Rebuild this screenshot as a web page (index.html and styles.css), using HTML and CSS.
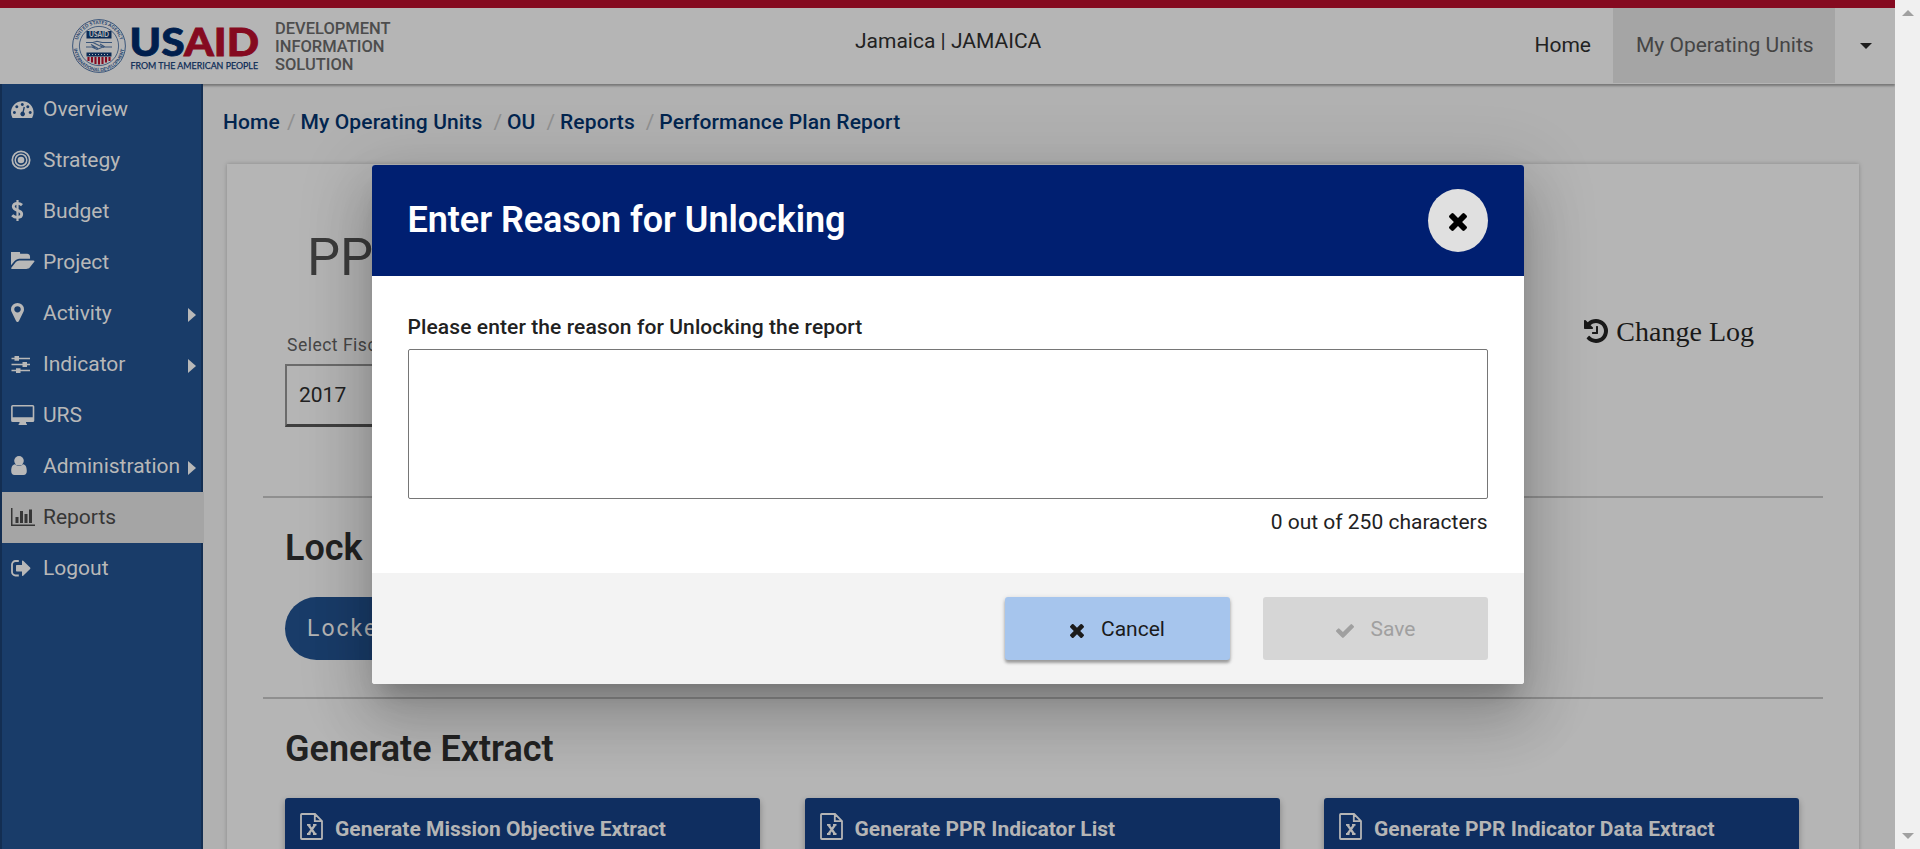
FILE: index.html
```html
<!DOCTYPE html>
<html lang="en">
<head>
<meta charset="utf-8">
<title>Performance Plan Report</title>
<link rel="stylesheet" href="styles.css">
</head>
<body>
<div class="app">
  <div class="page">
    <header class="topbar">
      <div class="brand">
        <svg class="logo" width="192" height="58" viewBox="0 0 192 58">
          <defs>
            <path id="arcTop" d="M6 29a22 22 0 0 1 44 0"/>
            <path id="arcBottom" d="M2.600 29a25.400 25.400 0 0 0 50.800 0"/>
          </defs>
          <circle cx="28" cy="29" r="26.400" fill="none" stroke="#3a5579" stroke-width="1"/>
          <circle cx="28" cy="29" r="19.600" fill="none" stroke="#3a5579" stroke-width=".9"/>
          <text class="seal"><textPath href="#arcTop" startOffset="6" textLength="57">UNITED STATES AGENCY</textPath></text>
          <text class="seal"><textPath href="#arcBottom" startOffset="3" textLength="73">INTERNATIONAL DEVELOPMENT</textPath></text>
          <rect x="15.500" y="14" width="25" height="7.500" fill="#0a2a55"/>
          <text class="seal-name" x="18" y="20" textLength="20">USAID</text>
          <path d="M15 25.500h7l4-1.300 5 1.300h10M15 30h6l5 2.500 6-2.500h9M22 25.500l6 3 5 2M24 31l-3-3M29 27l5 3M20 27.500l7 4" fill="none" stroke="#3a5579" stroke-width="1.100"/>
          <path d="M15.500 35.500h25v4h-25z" fill="#0a2a55"/>
          <path d="M18 37.500h21" stroke="#b5b5b5" stroke-width="1" stroke-dasharray="1 2"/>
          <path d="M17.500 40v4M21 40v5.500M24.500 40v7M28 40v7.500M31.500 40v7M35 40v5.500M38.500 40v4" stroke="#850a20" stroke-width="2.100"/>
          <text class="word" x="58.500" y="38.500" textLength="129.500" lengthAdjust="spacingAndGlyphs"><tspan fill="#001f4e" stroke="#001f4e">US</tspan><tspan fill="#850a20" stroke="#850a20">AID</tspan></text>
          <text class="tagline" x="59.500" y="51.500" textLength="127.500" lengthAdjust="spacingAndGlyphs">FROM THE AMERICAN PEOPLE</text>
        </svg>
        <div class="product">DEVELOPMENT<br>INFORMATION<br>SOLUTION</div>
      </div>
      <div class="unit">Jamaica | JAMAICA</div>
      <nav class="topnav">
        <a class="topnav-item">Home</a>
        <a class="topnav-item is-active">My Operating Units</a>
        <a class="topnav-item topnav-more"><i class="caret"></i></a>
      </nav>
    </header>
    <div class="body">
      <aside class="sidebar">
        <a class="side-item"><span class="ico"><svg width="23" height="17" viewBox="0 0 23 17"><path fill-rule="evenodd" d="M1.500 17Q0 14.500 0 11.500A11.300 11.300 0 0 1 22.600 11.500Q22.600 14.500 21.100 17zM3.400 9.900a1.500 1.500 0 1 0 .01 0zM5.800 4.300a1.500 1.500 0 1 0 .01 0zM11.300 1.900a1.500 1.500 0 1 0 .01 0zM16.800 4.300a1.500 1.500 0 1 0 .01 0zM19.200 9.900a1.500 1.500 0 1 0 .01 0zM12.600 5.800l-1 4.800a2.300 2.300 0 1 0 1.200.3l1.100-4.700z"/></svg></span><span class="side-label">Overview</span></a>
        <a class="side-item"><span class="ico up1"><svg width="20" height="20" viewBox="0 0 20 20"><circle cx="10" cy="10" r="8.700" fill="none" stroke="currentColor" stroke-width="1.700"/><circle cx="10" cy="10" r="5.800" fill="none" stroke="currentColor" stroke-width="1.500"/><circle cx="10" cy="10" r="3.300"/></svg></span><span class="side-label">Strategy</span></a>
        <a class="side-item"><span class="ico up1"><svg width="13" height="21" viewBox="0 0 13 21"><path d="M6.500 0v21" stroke="currentColor" stroke-width="2.200"/><path d="M11 5.200Q9 3.400 6.300 3.400C3.500 3.400 2.300 4.900 2.300 6.600c0 4.700 8.400 2.800 8.400 7.400 0 2-1.700 3.400-4.400 3.400Q3.200 17.400 1.200 15.300" fill="none" stroke="currentColor" stroke-width="2.900"/></svg></span><span class="side-label">Budget</span></a>
        <a class="side-item"><span class="ico up2"><svg width="24" height="17" viewBox="0 256 1856 1280" preserveAspectRatio="none"><path d="M1815 952q0 31-31 66l-336 396q-43 51-120.500 86.500t-143.500 35.500h-1088q-34 0-60.500-13t-26.500-43q0-31 31-66l336-396q43-51 120.500-86.500t143.500-35.500h1088q34 0 60.500 13t26.500 43zm-343-344v160h-832q-94 0-197 47.500t-164 119.500l-337 396-5 6q0-4-.5-12.500t-.5-12.500v-960q0-92 66-158t158-66h320q92 0 158 66t66 158v32h544q92 0 158 66t66 158z"/></svg></span><span class="side-label">Project</span></a>
        <a class="side-item"><span class="ico up1"><svg width="13" height="19" viewBox="384 128 1024 1536" preserveAspectRatio="none"><path d="M1152 640q0-106-75-181t-181-75-181 75-75 181 75 181 181 75 181-75 75-181zm256 0q0 109-33 179l-364 774q-16 33-47.500 52t-67.500 19-67.500-19-46.500-52l-365-774q-33-70-33-179 0-212 150-362t362-150 362 150 150 362z"/></svg></span><span class="side-label">Activity</span><i class="more"></i></a>
        <a class="side-item"><span class="ico"><svg width="20" height="17" viewBox="0 0 20 17"><path d="M.5 2.500h18.500M.5 8.500h18.500M.5 14.500h18.500" stroke="currentColor" stroke-width="1.700"/><path d="M3.500 0h4.500v4.800H3.500zM11.500 6.100H16v4.800h-4.500zM5 12.200h4.500V17H5z"/></svg></span><span class="side-label">Indicator</span><i class="more"></i></a>
        <a class="side-item"><span class="ico up1"><svg width="24" height="20" viewBox="0 0 24 20"><path fill-rule="evenodd" d="M1.700 0h20A1.600 1.600 0 0 1 23.300 1.600v13.900a1.600 1.600 0 0 1-1.600 1.600H15v1.200q.9.300.9.900v.8H7.600v-.8q0-.6.900-.9v-1.200H1.700A1.600 1.600 0 0 1 .1 15.500V1.600A1.600 1.600 0 0 1 1.700 0zm0 1.500v10.800h20V1.500z"/></svg></span><span class="side-label">URS</span></a>
        <a class="side-item"><span class="ico up1"><svg width="16" height="19" viewBox="0 0 16 19"><circle cx="8" cy="4.800" r="4.800"/><path d="M4 8.300a5.700 5.700 0 0 0 8 0c2.700.2 3.800 3.200 3.800 6.700 0 2.400-1.300 4-3.200 4H3.400C1.500 19 .2 17.400.2 15c0-3.500 1.100-6.500 3.800-6.700z"/></svg></span><span class="side-label">Administration</span><i class="more"></i></a>
        <a class="side-item is-active"><span class="ico up1"><svg width="24" height="18" viewBox="0 128 2048 1536"><path d="M640 896v512h-256v-512h256zm384-512v1024h-256v-1024h256zm1024 1152v128h-2048v-1536h128v1408h1920zm-640-896v768h-256v-768h256zm384-384v1152h-256v-1152h256z"/></svg></span><span class="side-label">Reports</span></a>
        <a class="side-item"><span class="ico"><svg width="20" height="17" viewBox="0 0 20 17"><path d="M7.800 1H4.500A3.500 3.500 0 0 0 1 4.500v7.500a3.500 3.500 0 0 0 3.500 3.500h3.300" fill="none" stroke="currentColor" stroke-width="1.800"/><path d="M5 5.700Q5 5 5.700 5H11V1.300Q11 0 12.200.8l6.900 6.800q.7.700 0 1.400l-6.900 6.700q-1.200.8-1.200-.5v-3.700H5.700Q5 11.500 5 10.800z"/></svg></span><span class="side-label">Logout</span></a>
      </aside>
      <main class="main">
        <nav class="crumbs"><a>Home</a><i class="first">/</i><a>My Operating Units</a><i>/</i><a>OU</a><i>/</i><a>Reports</a><i>/</i><a>Performance Plan Report</a></nav>
        <section class="sheet">
          <div class="sheet-head">
            <div class="filters">
              <h1 class="sheet-title">PPR</h1>
              <div class="field-label">Select Fiscal Year</div>
              <div class="select">2017</div>
            </div>
            <a class="changelog"><svg width="24" height="24" viewBox="128 128 1536 1536"><path d="M1664 896q0 156-61 298t-164 245-245 164-298 61q-172 0-327-72.500t-264-204.500q-7-10-6.500-22.500t8.500-20.500l137-138q10-9 25-9 16 2 23 12 73 95 179 147t225 52q104 0 198.500-40.500t163.500-109.500 109.500-163.500 40.500-198.500-40.500-198.500-109.500-163.500-163.500-109.500-198.500-40.500q-98 0-188 35.500t-160 101.500l137 138q31 30 14 69-17 40-59 40h-448q-26 0-45-19t-19-45v-448q0-42 40-59 39-17 69 14l130 129q107-101 244.500-156.500t284.500-55.500q156 0 298 61t245 164 164 245 61 298zm-640-288v448q0 14-9 23t-23 9h-320q-14 0-23-9t-9-23v-64q0-14 9-23t23-9h224v-352q0-14 9-23t23-9h64q14 0 23 9t9 23z"/></svg><span>Change Log</span></a>
          </div>
          <div class="block lock">
            <h2 class="block-title">Lock</h2>
            <span class="pill">Locked</span>
          </div>
          <div class="block">
            <h2 class="block-title">Generate Extract</h2>
            <div class="extracts">
              <a class="extract"><svg width="23" height="27" viewBox="0 0 23 27"><path d="M1 1.800Q1 1 1.800 1H15l7 7v17.200q0 .8-.8.8H1.800Q1 26 1 25.200zM14.800 1v7.200H22M7 11.800h3.500M13 11.800h3.500M7 21h3.500M13 21h3.500" fill="none" stroke="currentColor" stroke-width="1.800"/><path d="M8.500 12l6.500 9M15 12l-6.500 9" stroke="currentColor" stroke-width="2.200"/></svg><span>Generate Mission Objective Extract</span></a>
              <a class="extract"><svg width="23" height="27" viewBox="0 0 23 27"><path d="M1 1.800Q1 1 1.800 1H15l7 7v17.200q0 .8-.8.8H1.800Q1 26 1 25.200zM14.800 1v7.200H22M7 11.800h3.500M13 11.800h3.500M7 21h3.500M13 21h3.500" fill="none" stroke="currentColor" stroke-width="1.800"/><path d="M8.500 12l6.500 9M15 12l-6.500 9" stroke="currentColor" stroke-width="2.200"/></svg><span>Generate PPR Indicator List</span></a>
              <a class="extract"><svg width="23" height="27" viewBox="0 0 23 27"><path d="M1 1.800Q1 1 1.800 1H15l7 7v17.200q0 .8-.8.8H1.800Q1 26 1 25.200zM14.800 1v7.200H22M7 11.800h3.500M13 11.800h3.500M7 21h3.500M13 21h3.500" fill="none" stroke="currentColor" stroke-width="1.800"/><path d="M8.500 12l6.500 9M15 12l-6.500 9" stroke="currentColor" stroke-width="2.200"/></svg><span>Generate PPR Indicator Data Extract</span></a>
            </div>
          </div>
        </section>
      </main>
    </div>
    <div class="overlay">
      <div class="modal">
        <div class="modal-head">
          <h2 class="modal-title">Enter Reason for Unlocking</h2>
          <button class="close"><svg width="18" height="18" viewBox="302 302 1188 1188"><path d="M1490 1322q0 40-28 68l-136 136q-28 28-68 28t-68-28l-294-294-294 294q-28 28-68 28t-68-28l-136-136q-28-28-28-68t28-68l294-294-294-294q-28-28-28-68t28-68l136-136q28-28 68-28t68 28l294 294 294-294q28-28 68-28t68 28l136 136q28 28 28 68t-28 68l-294 294 294 294q28 28 28 68z" transform="translate(0 -64)"/></svg></button>
        </div>
        <div class="modal-body">
          <label class="prompt">Please enter the reason for Unlocking the report</label>
          <div class="textarea"></div>
          <div class="counter">0 out of 250 characters</div>
        </div>
        <div class="modal-foot">
          <button class="btn btn-cancel"><svg width="14" height="14" viewBox="302 302 1188 1188"><path d="M1490 1322q0 40-28 68l-136 136q-28 28-68 28t-68-28l-294-294-294 294q-28 28-68 28t-68-28l-136-136q-28-28-28-68t28-68l294-294-294-294q-28-28-28-68t28-68l136-136q28-28 68-28t68 28l294 294 294-294q28-28 68-28t68 28l136 136q28 28 28 68t-28 68l-294 294 294 294q28 28 28 68z" transform="translate(0 -64)"/></svg><span>Cancel</span></button>
          <button class="btn btn-save"><svg width="18" height="14" viewBox="121 334 1550 1188"><path d="M1671 566q0 40-28 68l-724 724-136 136q-28 28-68 28t-68-28l-136-136-362-362q-28-28-28-68t28-68l136-136q28-28 68-28t68 28l294 295 656-657q28-28 68-28t68 28l136 136q28 28 28 68z"/></svg><span>Save</span></button>
        </div>
      </div>
    </div>
  </div>
  <div class="scrollbar"><i class="sb-up"></i><i class="sb-down"></i></div>
</div>
</body>
</html>
```

FILE: styles.css
```css
* { box-sizing: border-box; }
body { margin: 0; background: #b1b1b1; font-family: Roboto, "Liberation Sans", sans-serif; font-size: 21px; color: #222; }
h1, h2 { margin: 0; }
svg { display: block; fill: currentColor; flex: none; }

.app { display: flex; width: 1920px; height: 849px; overflow: hidden; }
.page { position: relative; width: 1895px; height: 849px; overflow: hidden; display: flex; flex-direction: column; }

.topbar { display: flex; flex: none; height: 84px; background: #b5b5b5; border-top: 8px solid #850a20; box-shadow: 0 2px 2px #777; position: relative; }
.brand { display: flex; width: 855px; padding: 9px 0 0 71px; }
.logo { flex: none; overflow: visible; }
.seal { font-family: Lato, sans-serif; font-weight: 900; font-size: 4.700px; fill: #2d4a73; }
.seal-name { font-family: Lato, sans-serif; font-weight: 900; font-size: 6.500px; fill: #b5b5b5; }
.word { font-family: Lato, sans-serif; font-weight: 900; font-size: 37.500px; stroke-width: .8px; }
.tagline { font-family: Lato, sans-serif; font-weight: 400; font-size: 9.800px; fill: #0a2a55; stroke: #0a2a55; stroke-width: .25px; }
.product { margin: 3px 0 0 12px; font-size: 16.500px; line-height: 18px; font-weight: 500; color: #4d4d4d; }
.unit { flex: 1; padding-top: 21px; line-height: 25px; }
.topnav { display: flex; height: 75px; }
.topnav-item { display: flex; align-items: center; padding: 0 22px 2px; color: #222; white-space: nowrap; }
.topnav-item.is-active { background: #a5a5a5; color: #444; width: 222px; padding-left: 23px; }
.topnav-item.topnav-more { width: 60px; padding: 0 0 0 25px; }
.caret { border: 6px solid transparent; border-top-color: #1c1c1c; border-bottom: 0; }

.body { display: flex; flex: 1; min-height: 0; }
.sidebar { width: 203px; flex: none; background: #193c69; border-left: 2px solid #132e52; border-right: 2px solid #132e52; position: relative; }
.side-item { display: flex; align-items: center; height: 51px; padding-left: 9px; color: #b8b8b8; }
.side-item.is-active { background: #a5a5a5; color: #363636; width: 202px; }
.side-label { padding-bottom: 2px; }
.ico { width: 32px; flex: none; }
.up1 { padding-bottom: 2px; }
.up2 { padding-bottom: 4px; }
.more { margin: 2px 5px 0 auto; border: 7px solid transparent; border-left: 8px solid #b8b8b8; border-right: 0; }

.main { flex: 1; min-width: 0; padding: 0 36px 0 24px; }
.crumbs { display: flex; height: 80px; padding-top: 26px; margin-left: -4px; line-height: 25px; font-weight: 500; letter-spacing: .14px; color: #02254f; }
.crumbs i { font-style: normal; font-weight: 400; color: #8f8f8f; width: 24.500px; padding-left: 11px; }
.crumbs .first { width: 20.500px; padding-left: 7px; }
.sheet { height: 800px; background: #b5b5b5; box-shadow: 0 0 4px #888; padding: 0 36px; }
.sheet-head { display: flex; justify-content: space-between; height: 334px; border-bottom: 2px solid #8f8f8f; }
.filters { padding: 62px 0 0 22px; width: 420px; }
.sheet-title { font-weight: 400; font-size: 52.500px; line-height: 62px; padding-left: 22px; color: #3b3b3b; }
.field-label { margin-top: 45px; font-size: 17.500px; line-height: 24px; letter-spacing: .5px; padding-left: 2px; color: #474747; }
.select { margin-top: 7px; height: 63px; border: 2px solid #6b6b6b; border-bottom: 3px solid #3f3f3f; padding: 0 12px; line-height: 58px; }
.changelog { display: flex; gap: 8px; height: 32px; line-height: 32px; margin: 151px 69px 0 0; align-items: center; font-family: "Liberation Serif", serif; font-size: 28px; color: #191919; }
.changelog span { padding-top: 1px; }
.block { padding: 29px 22px 0; }
.lock { height: 201px; border-bottom: 2px solid #8f8f8f; }
.block-title { font-weight: 600; font-size: 36px; line-height: 42px; color: #222; }
.pill { display: flex; align-items: center; width: 160px; height: 63px; margin-top: 28px; padding: 0 0 1px 22px; border-radius: 32px; background: #193c69; color: #b5b5b5; font-size: 23px; letter-spacing: 2px; }
.extracts { display: grid; grid-template-columns: repeat(3, 475px); gap: 44.500px; margin-top: 28px; }
.extract { display: flex; align-items: center; gap: 12px; height: 62px; padding: 0 0 5px 15px; border-radius: 3px; background: #0f2e60; color: #b5b5b5; font-weight: 700; box-shadow: 0 3px 6px rgba(0,0,0,.3); }
.extract span { padding-top: 4px; }

.overlay { position: absolute; inset: 0; display: flex; align-items: center; justify-content: center; }
.modal { width: 1152px; height: 519px; display: flex; flex-direction: column; border-radius: 3px; overflow: hidden; background: #fff; box-shadow: 0 16.500px 22.500px -10.500px rgba(0,0,0,.2), 0 36px 57px 4.500px rgba(0,0,0,.14), 0 13.500px 69px 12px rgba(0,0,0,.12); }
.modal-head { display: flex; align-items: center; justify-content: space-between; height: 111px; padding: 0 36px; background: #001f71; color: #fff; }
.modal-title { font-size: 36px; font-weight: 600; line-height: 42px; letter-spacing: -.06px; padding-bottom: 2px; }
.close { display: flex; align-items: center; justify-content: center; width: 60px; height: 63px; border: 0; border-radius: 50%; background: #e0e0e0; color: #000; padding: 2px 0 0; }
.modal-body { flex: 1; padding: 36px 36px 0; }
.prompt { display: block; height: 37px; line-height: 30px; font-weight: 500; letter-spacing: .1px; color: #212121; }
.textarea { height: 150px; border: 1px solid #767676; border-radius: 2px; background: #fff; }
.counter { text-align: right; line-height: 25px; margin-top: 11px; }
.modal-foot { display: flex; align-items: center; justify-content: flex-end; gap: 33px; height: 111px; padding: 0 36px; background: #f3f3f3; }
.btn { display: flex; align-items: center; justify-content: center; gap: 17px; width: 225px; height: 63px; padding: 0 0 0 1px; border: 0; border-radius: 3px; font: 400 21px Roboto, sans-serif; }
.btn svg { margin-top: 4px; }
.btn-cancel { background: #a6c5ed; color: #1b1b1b; box-shadow: 0 3px 3px rgba(0,0,0,.3), 0 1px 5px rgba(0,0,0,.15); }
.btn-save { background: #d6d6d6; color: #a0a0a0; }

.scrollbar { width: 25px; background: #f0f0f0; display: flex; flex-direction: column; justify-content: space-between; align-items: center; padding: 10px 0; }
.sb-up { border: 6px solid transparent; border-bottom-color: #a0a0a0; border-top: 0; }
.sb-down { border: 6px solid transparent; border-top-color: #a0a0a0; border-bottom: 0; }
```
